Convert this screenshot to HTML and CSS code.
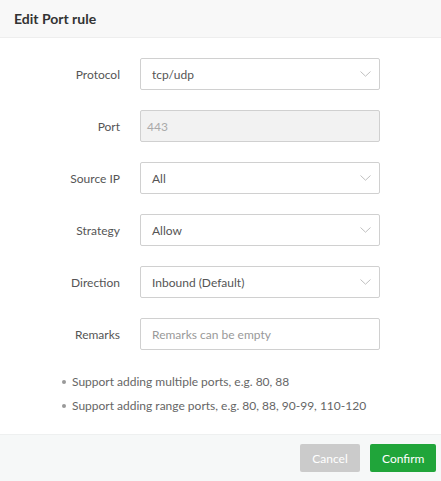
FILE: index.html
```html
<!DOCTYPE html>
<html>
<head>
<meta charset="utf-8">
<link rel="stylesheet" href="styles.css">
</head>
<body>
<div class="dialog">
  <div class="header">Edit Port rule</div>
  <div class="body">
    <div class="row">
      <div class="label">Protocol</div>
      <div class="field select"><span>tcp/udp</span><svg class="chev" width="11" height="6" viewBox="0 0 11 6"><path d="M0.5 0.5 L5.5 5.2 L10.5 0.5" fill="none" stroke="#c0c0c0" stroke-width="1"/></svg></div>
    </div>
    <div class="row">
      <div class="label">Port</div>
      <div class="field disabled"><span>443</span></div>
    </div>
    <div class="row">
      <div class="label">Source IP</div>
      <div class="field select"><span>All</span><svg class="chev" width="11" height="6" viewBox="0 0 11 6"><path d="M0.5 0.5 L5.5 5.2 L10.5 0.5" fill="none" stroke="#c0c0c0" stroke-width="1"/></svg></div>
    </div>
    <div class="row">
      <div class="label">Strategy</div>
      <div class="field select"><span>Allow</span><svg class="chev" width="11" height="6" viewBox="0 0 11 6"><path d="M0.5 0.5 L5.5 5.2 L10.5 0.5" fill="none" stroke="#c0c0c0" stroke-width="1"/></svg></div>
    </div>
    <div class="row">
      <div class="label">Direction</div>
      <div class="field select"><span>Inbound (Default)</span><svg class="chev" width="11" height="6" viewBox="0 0 11 6"><path d="M0.5 0.5 L5.5 5.2 L10.5 0.5" fill="none" stroke="#c0c0c0" stroke-width="1"/></svg></div>
    </div>
    <div class="row">
      <div class="label">Remarks</div>
      <div class="field"><span class="placeholder">Remarks can be empty</span></div>
    </div>
    <ul class="tips">
      <li>Support adding multiple ports, e.g. 80, 88</li>
      <li>Support adding range ports, e.g. 80, 88, 90-99, 110-120</li>
    </ul>
  </div>
  <div class="footer">
    <button class="btn cancel">Cancel</button>
    <button class="btn confirm">Confirm</button>
  </div>
</div>
</body>
</html>
```

FILE: styles.css
```css
* { box-sizing: border-box; }
html, body { margin: 0; padding: 0; background: #fff; }
body { font-family: "Segoe UI", "Lato", "Noto Sans", sans-serif; font-size: 12px; color: #555; }
.dialog { width: 441px; height: 481px; display: flex; flex-direction: column; background: #fff; }
.header {
  height: 38px; line-height: 37px; padding-left: 14px;
  background: #f8f8f8; border-bottom: 1px solid #eee;
  font-size: 14px; font-weight: bold; color: #333;
}
.body { flex: 1; padding-top: 20px; }
.row { display: flex; align-items: center; height: 32px; margin-bottom: 20px; }
.label { width: 120px; text-align: right; color: #555; font-size: 12px; }
.field {
  margin-left: 20px; width: 240px; height: 32px;
  border: 1px solid #d0d0d0; border-radius: 2px;
  display: flex; align-items: center; justify-content: space-between;
  padding: 0 8px 0 11px; color: #555; font-size: 12px;
}
.field.disabled { background: #f2f2f2; color: #aaa; padding-left: 6px; }
.placeholder { color: #999; padding-left: 0; }
.chev { margin-right: 0; }
.tips { margin: 0; padding: 0 0 0 72px; list-style: none; color: #666; font-size: 12px; }
.tips li { line-height: 24px; position: relative; }
.tips li::before { content: ""; position: absolute; left: -10px; top: 10px; width: 4px; height: 4px; border-radius: 50%; background: #999; }
.footer {
  height: 47px; background: #f6f8f8; border-top: 1px solid #eef0f0;
  display: flex; justify-content: flex-end; align-items: center; padding-right: 5px; gap: 10px;
}
.btn { height: 28px; border: none; border-radius: 2px; color: #fff; font-family: inherit; font-size: 12px; padding: 0 12px; }
.cancel { background: #cbcbcb; width: 60px; }
.confirm { background: #20a53a; width: 66px; }
```
